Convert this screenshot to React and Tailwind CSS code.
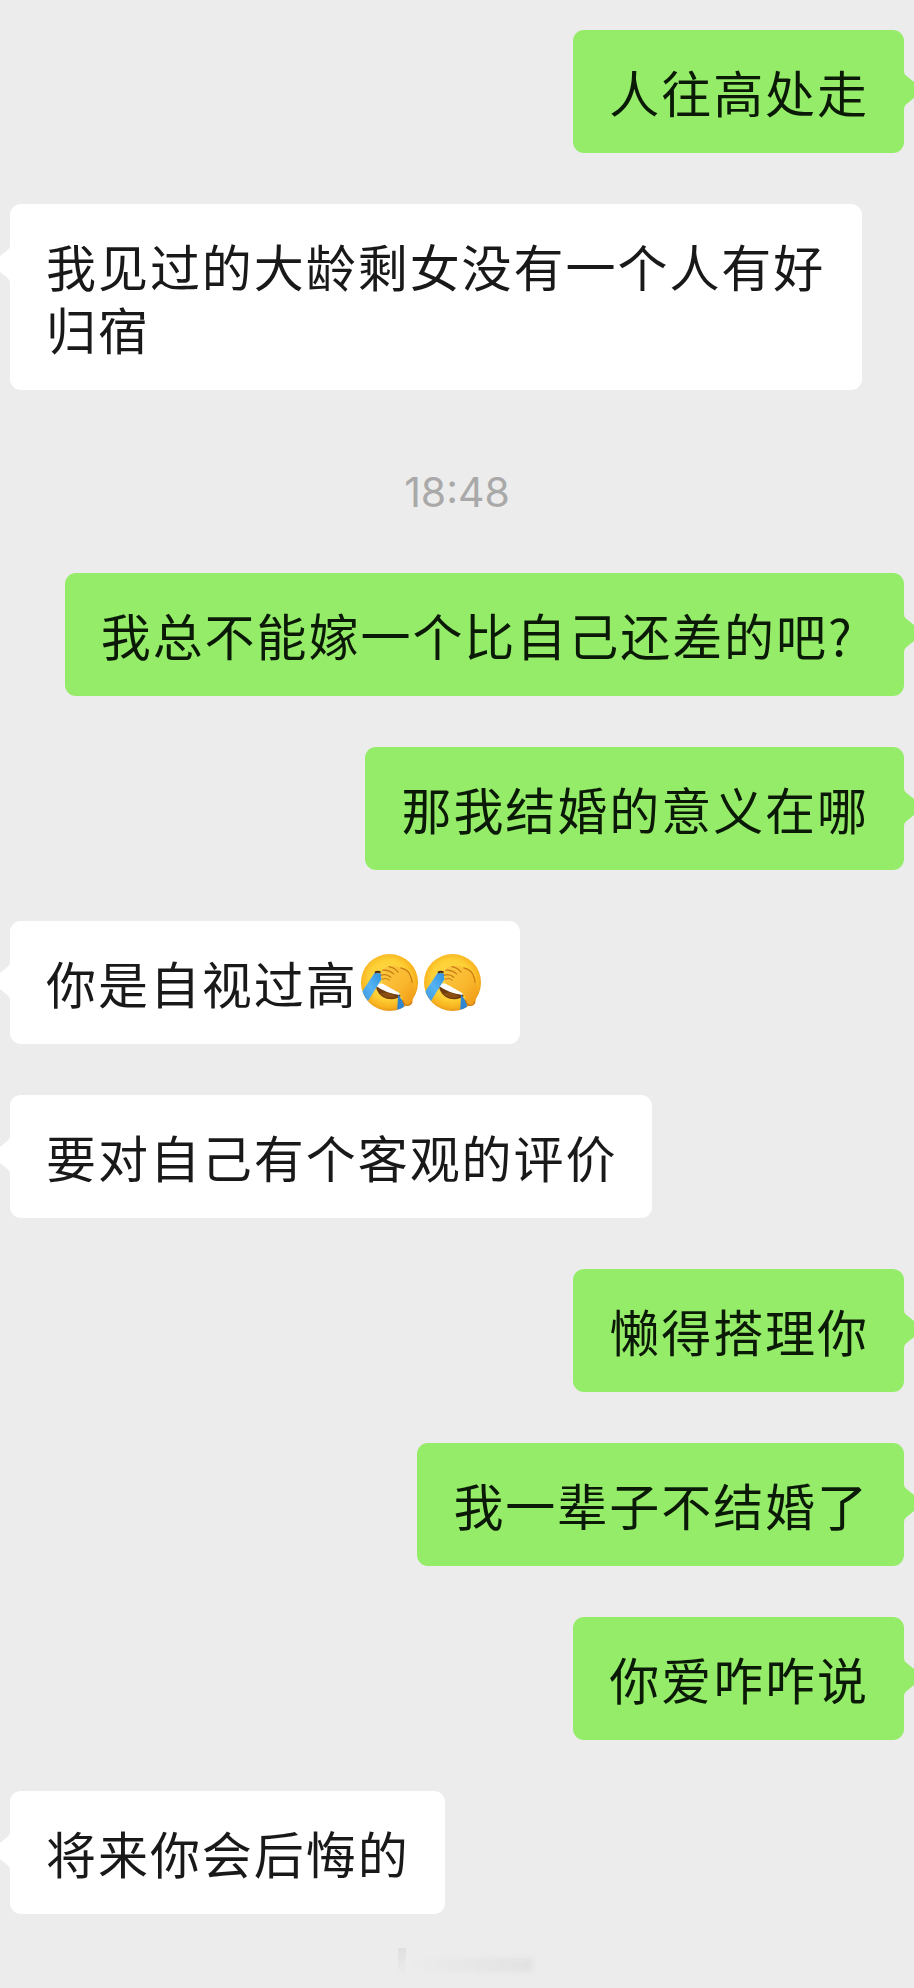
const messages = [
  { id: 1, from: "me", text: "人往高处走" },
  { id: 2, from: "them", text: "我见过的大龄剩女没有一个人有好归宿" },
  { id: 3, time: "18:48" },
  { id: 4, from: "me", text: "我总不能嫁一个比自己还差的吧", question: true },
  { id: 5, from: "me", text: "那我结婚的意义在哪" },
  { id: 6, from: "them", text: "你是自视过高", emojis: 2 },
  { id: 7, from: "them", text: "要对自己有个客观的评价" },
  { id: 8, from: "me", text: "懒得搭理你" },
  { id: 9, from: "me", text: "我一辈子不结婚了" },
  { id: 10, from: "me", text: "你爱咋咋说" },
  { id: 11, from: "them", text: "将来你会后悔的" },
]

function FacepalmEmoji() {
  return (
    <svg viewBox="0 0 172 172" className="w-[57px] h-[57px] shrink-0">
      <defs>
        <radialGradient id="face" cx="48%" cy="45%" r="54%">
          <stop offset="0" stopColor="#ffe14d" />
          <stop offset="0.65" stopColor="#fdcf35" />
          <stop offset="0.9" stopColor="#f8b31f" />
          <stop offset="1" stopColor="#e99c1c" />
        </radialGradient>
        <linearGradient id="hand" x1="0" y1="0" x2="1" y2="1">
          <stop offset="0" stopColor="#fbc944" />
          <stop offset="0.6" stopColor="#f9b62c" />
          <stop offset="1" stopColor="#ef9612" />
        </linearGradient>
        <linearGradient id="tear" x1="1" y1="0" x2="0" y2="1">
          <stop offset="0" stopColor="#2f8fdc" />
          <stop offset="0.5" stopColor="#55b4f4" />
          <stop offset="1" stopColor="#3a8fd8" />
        </linearGradient>
        <clipPath id="round">
          <circle cx="86" cy="86" r="86" />
        </clipPath>
      </defs>
      <circle cx="86" cy="86" r="86" fill="url(#face)" />
      <g clipPath="url(#round)">
        <path d="M44 92Q48 126 78 135Q104 140 120 127L106 105Z" fill="#6d3b0c" />
        <path d="M56 119Q78 138 106 130Q94 118 74 116Z" fill="#8a4d12" />
        <path d="M44 88L66 90L118 116L116 124Q76 119 44 96Z" fill="#fff" />
        <path d="M42 56L64 60L62 76L18 146L-4 124Z" fill="url(#tear)" />
        <path d="M112 122L130 148L128 172L109 172Z" fill="#2e86d3" />
      </g>
      <path d="M42 56Q54 50 66 60" fill="none" stroke="#4b2b12" strokeWidth="6" />
      <path
        d="M62 64Q54 53 64 48Q70 36 88 38Q104 32 120 42Q143 44 151 64Q162 82 160 110L155 146Q150 157 138 155Q127 153 126 140Q126 124 113 116L64 88Q58 80 64 76Q57 70 62 64Z"
        fill="url(#hand)"
      />
      <g fill="none" stroke="#c97a12" strokeWidth="3.4" strokeLinecap="round">
        <path d="M65 49Q82 46 99 60" />
        <path d="M84 38Q102 41 112 55" />
        <path d="M62 64Q76 59 90 70" />
        <path d="M65 76Q76 71 85 79" />
        <path d="M120 42Q145 48 150 68Q154 79 154 86" />
        <path d="M126 140Q127 151 138 155Q150 155 153 145" />
      </g>
    </svg>
  )
}

function Tail({ mine }) {
  return (
    <svg
      viewBox="0 0 10 38"
      className={
        mine
          ? "absolute left-full top-[41px] w-[10px] h-[38px]"
          : "absolute right-full top-[41px] w-[10px] h-[38px] -scale-x-100"
      }
    >
      <path d="M0 0Q0 3 2 4.500L10 11V27L2 33.500Q0 35 0 38Z" fill={mine ? "#95ec69" : "#ffffff"} />
    </svg>
  )
}

function Bubble({ message }) {
  const mine = message.from === "me"
  return (
    <div className={mine ? "flex justify-end" : "flex justify-start"}>
      <div
        className={
          "relative flex items-center max-w-[852px] rounded-[11px] pl-[36px] pr-[35px] pt-[30px] pb-[30px] text-[50px] leading-[63px] tracking-[1.95px] " +
          (mine ? "bg-[#95ec69] text-[#0b1a06]" : "bg-white text-[#191919]")
        }
      >
        <Tail mine={mine} />
        <p>
          {message.text}
          {message.question && <span className="inline-block w-[41px]">?</span>}
        </p>
        {message.emojis && (
          <div className="flex gap-[6px] pl-[3px] pr-[4px]">
            {Array.from({ length: message.emojis }, (_, i) => (
              <FacepalmEmoji key={i} />
            ))}
          </div>
        )}
      </div>
    </div>
  )
}

export default function App() {
  return (
    <main
      lang="zh-CN"
      className="w-[914px] h-[1988px] overflow-hidden bg-[#ececec] px-[10px] pt-[30px] font-['Noto_Sans_CJK_SC',sans-serif]"
    >
      <div className="flex flex-col gap-[51px]">
        {messages.map(m =>
          m.time ? (
            <div key={m.id} className="h-[81px] pt-[26px] text-center text-[41px] leading-[50px] text-[#a9a9a9] font-['Inter',sans-serif]">
              {m.time}
            </div>
          ) : (
            <Bubble key={m.id} message={m} />
          )
        )}
      </div>
      {/* top edge of the next, faded-out row */}
      <div className="flex items-start pt-[34px] pl-[388px]">
        <div className="w-[8px] h-[26px] bg-linear-to-b from-[#dfdfdf] to-[#ececec]" />
        <div className="mt-[10px] w-[127px] h-[14px] bg-linear-to-r from-[#ececec] to-[#e2e2e2] blur-[2px]" />
      </div>
    </main>
  )
}
